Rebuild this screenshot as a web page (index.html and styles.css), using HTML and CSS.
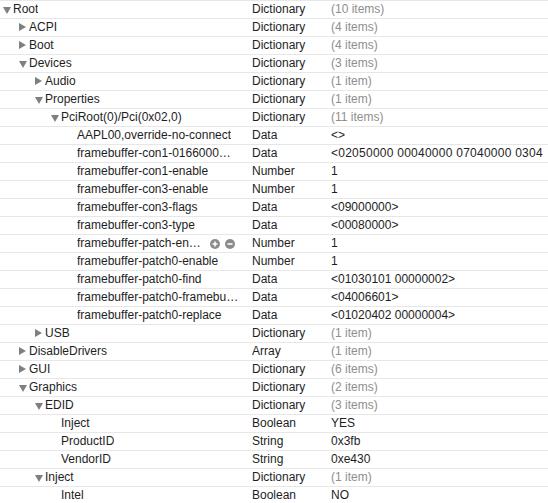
FILE: index.html
```html
<!DOCTYPE html>
<html>
<head>
<meta charset="utf-8">
<link rel="stylesheet" href="styles.css">
</head>
<body>
<div class="outline">
  <div class="row"><div class="key l0"><span class="tw open"></span><span class="name">Root</span></div><div class="type">Dictionary</div><div class="val muted">(10 items)</div></div>
  <div class="row"><div class="key l1"><span class="tw"></span><span class="name">ACPI</span></div><div class="type">Dictionary</div><div class="val muted">(4 items)</div></div>
  <div class="row"><div class="key l1"><span class="tw"></span><span class="name">Boot</span></div><div class="type">Dictionary</div><div class="val muted">(4 items)</div></div>
  <div class="row"><div class="key l1"><span class="tw open"></span><span class="name">Devices</span></div><div class="type">Dictionary</div><div class="val muted">(3 items)</div></div>
  <div class="row"><div class="key l2"><span class="tw"></span><span class="name">Audio</span></div><div class="type">Dictionary</div><div class="val muted">(1 item)</div></div>
  <div class="row"><div class="key l2"><span class="tw open"></span><span class="name">Properties</span></div><div class="type">Dictionary</div><div class="val muted">(1 item)</div></div>
  <div class="row"><div class="key l3"><span class="tw open"></span><span class="name">PciRoot(0)/Pci(0x02,0)</span></div><div class="type">Dictionary</div><div class="val muted">(11 items)</div></div>
  <div class="row"><div class="key l4"><span class="leaf"></span><span class="name">AAPL00,override-no-connect</span></div><div class="type">Data</div><div class="val">&lt;&gt;</div></div>
  <div class="row"><div class="key l4"><span class="leaf"></span><span class="name">framebuffer-con1-0166000…</span></div><div class="type">Data</div><div class="val hex">&lt;02050000 00040000 07040000 0304</div></div>
  <div class="row"><div class="key l4"><span class="leaf"></span><span class="name">framebuffer-con1-enable</span></div><div class="type">Number</div><div class="val">1</div></div>
  <div class="row"><div class="key l4"><span class="leaf"></span><span class="name">framebuffer-con3-enable</span></div><div class="type">Number</div><div class="val">1</div></div>
  <div class="row"><div class="key l4"><span class="leaf"></span><span class="name">framebuffer-con3-flags</span></div><div class="type">Data</div><div class="val">&lt;09000000&gt;</div></div>
  <div class="row"><div class="key l4"><span class="leaf"></span><span class="name">framebuffer-con3-type</span></div><div class="type">Data</div><div class="val">&lt;00080000&gt;</div></div>
  <div class="row"><div class="key l4"><span class="leaf"></span><span class="name">framebuffer-patch-en…</span><span class="btns"><svg class="btn" viewBox="0 0 10 10" width="10" height="10"><circle cx="5" cy="5" r="5" fill="#8c8c8c"/><path d="M2.5 5h5M5 2.5v5" stroke="#fff" stroke-width="1.6"/></svg><svg class="btn" viewBox="0 0 10 10" width="10" height="10"><circle cx="5" cy="5" r="5" fill="#8c8c8c"/><path d="M2.5 5h5" stroke="#fff" stroke-width="1.6"/></svg></span></div><div class="type">Number</div><div class="val">1</div></div>
  <div class="row"><div class="key l4"><span class="leaf"></span><span class="name">framebuffer-patch0-enable</span></div><div class="type">Number</div><div class="val">1</div></div>
  <div class="row"><div class="key l4"><span class="leaf"></span><span class="name">framebuffer-patch0-find</span></div><div class="type">Data</div><div class="val">&lt;01030101 00000002&gt;</div></div>
  <div class="row"><div class="key l4"><span class="leaf"></span><span class="name">framebuffer-patch0-framebu…</span></div><div class="type">Data</div><div class="val">&lt;04006601&gt;</div></div>
  <div class="row"><div class="key l4"><span class="leaf"></span><span class="name">framebuffer-patch0-replace</span></div><div class="type">Data</div><div class="val">&lt;01020402 00000004&gt;</div></div>
  <div class="row"><div class="key l2"><span class="tw"></span><span class="name">USB</span></div><div class="type">Dictionary</div><div class="val muted">(1 item)</div></div>
  <div class="row"><div class="key l1"><span class="tw"></span><span class="name">DisableDrivers</span></div><div class="type">Array</div><div class="val muted">(1 item)</div></div>
  <div class="row"><div class="key l1"><span class="tw"></span><span class="name">GUI</span></div><div class="type">Dictionary</div><div class="val muted">(6 items)</div></div>
  <div class="row"><div class="key l1"><span class="tw open"></span><span class="name">Graphics</span></div><div class="type">Dictionary</div><div class="val muted">(2 items)</div></div>
  <div class="row"><div class="key l2"><span class="tw open"></span><span class="name">EDID</span></div><div class="type">Dictionary</div><div class="val muted">(3 items)</div></div>
  <div class="row"><div class="key l3"><span class="leaf"></span><span class="name">Inject</span></div><div class="type">Boolean</div><div class="val">YES</div></div>
  <div class="row"><div class="key l3"><span class="leaf"></span><span class="name">ProductID</span></div><div class="type">String</div><div class="val">0x3fb</div></div>
  <div class="row"><div class="key l3"><span class="leaf"></span><span class="name">VendorID</span></div><div class="type">String</div><div class="val">0xe430</div></div>
  <div class="row"><div class="key l2"><span class="tw open"></span><span class="name">Inject</span></div><div class="type">Dictionary</div><div class="val muted">(1 item)</div></div>
  <div class="row"><div class="key l3"><span class="leaf"></span><span class="name">Intel</span></div><div class="type">Boolean</div><div class="val">NO</div></div>
</div>
</body>
</html>
```

FILE: styles.css
```css
html, body {
  margin: 0;
  padding: 0;
  background: #ffffff;
  overflow: hidden;
}
body {
  font-family: "Liberation Sans", Arial, sans-serif;
  font-size: 12px;
  color: #1e1e1e;
}
.outline {
  display: flex;
  flex-direction: column;
  width: 548px;
}
.row {
  display: grid;
  grid-template-columns: 252px 79px 1fr;
  height: 17px;
  border-top: 1px solid #e7e7e7;
  align-items: center;
  white-space: nowrap;
  line-height: 17px;
}
.key {
  display: flex;
  align-items: center;
  overflow: hidden;
  padding-right: 12px;
}
.l0 { padding-left: 3px; }
.l1 { padding-left: 19px; }
.l2 { padding-left: 35px; }
.l3 { padding-left: 51px; }
.l4 { padding-left: 67px; }
.tw, .leaf {
  flex: none;
  width: 10px;
  height: 17px;
  position: relative;
}
.tw::before {
  content: "";
  position: absolute;
  left: 0;
  top: 4px;
  width: 0;
  height: 0;
  border-top: 4.5px solid transparent;
  border-bottom: 4.5px solid transparent;
  border-left: 7px solid #7f7f7f;
}
.tw.open::before {
  left: 0;
  top: 6px;
  border-left: 4px solid transparent;
  border-right: 4px solid transparent;
  border-top: 7px solid #7f7f7f;
  border-bottom: 0;
}
.name {
  overflow: hidden;
  text-overflow: ellipsis;
}
.btns {
  display: flex;
  gap: 5px;
  margin-left: 9px;
}
.btn {
  display: block;
}
.type {
  overflow: hidden;
}
.val {
  overflow: hidden;
}
.hex {
  letter-spacing: 0.25px;
}
.muted {
  color: #8e8e8e;
}
```
